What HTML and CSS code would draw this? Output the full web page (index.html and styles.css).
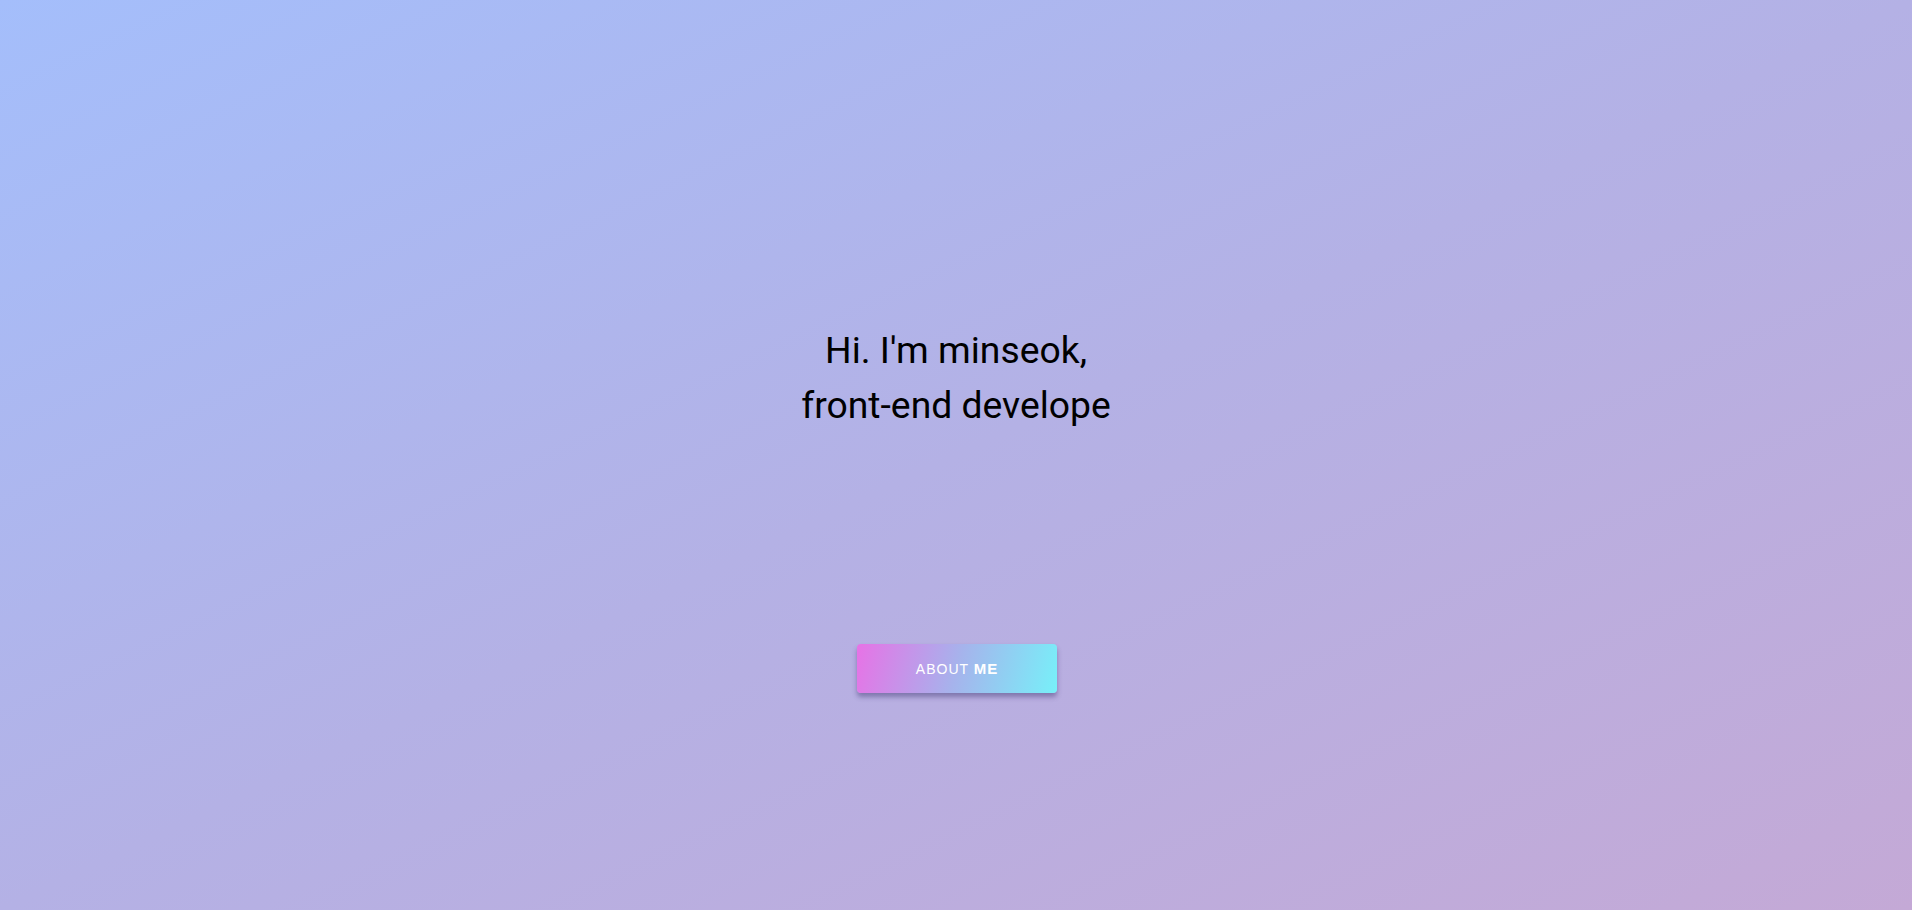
FILE: index.html
```html
<!DOCTYPE html>
<html>
<head>
<meta charset="utf-8">
<link rel="stylesheet" href="styles.css">
</head>
<body>
<main class="hero">
  <h1 class="title">Hi. I'm minseok,<br>front-end develope</h1>
  <button class="about-btn">ABOUT <b>ME</b></button>
</main>
</body>
</html>
```
FILE: styles.css
```css
html, body {
  margin: 0;
  height: 100%;
}
body {
  background: linear-gradient(to right bottom, #a4befb 0%, #b4b1e5 50%, #c4a9d6 100%);
  font-family: Roboto, "Liberation Sans", sans-serif;
}
.hero {
  height: 910px;
  display: flex;
  flex-direction: column;
  align-items: center;
  padding-top: 323px;
  box-sizing: border-box;
}
.title {
  margin: 0;
  font-weight: 400;
  font-size: 37.3px;
  line-height: 55px;
  color: #000;
  text-align: center;
}
.about-btn {
  margin-top: 211px;
  margin-left: 2px;
  width: 200px;
  height: 49px;
  border: none;
  border-radius: 4px;
  background: linear-gradient(105deg, #e772e6 0%, #a6b3ec 50%, #77f0f9 100%);
  box-shadow: 0 4px 5px rgba(60, 50, 110, 0.45);
  color: #fff;
  font-family: "Liberation Sans", Arial, sans-serif;
  font-size: 14px;
  letter-spacing: 1px;
  padding: 0;
}
.about-btn b {
  font-size: 15px;
}
```
